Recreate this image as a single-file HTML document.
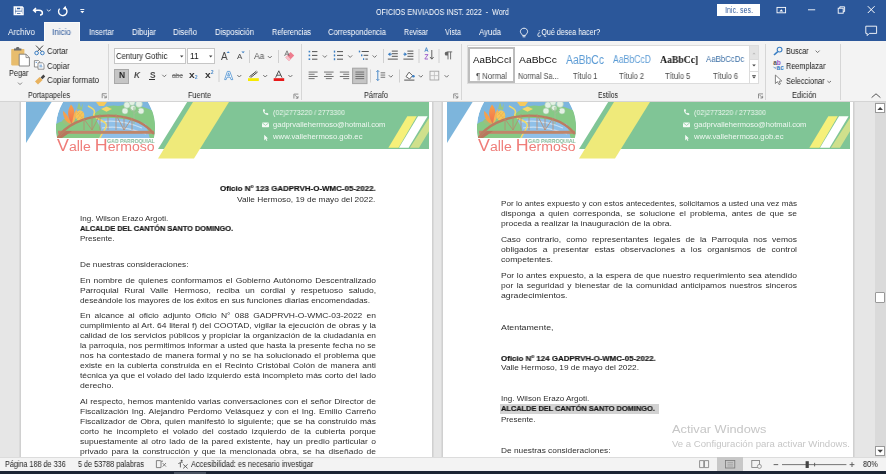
<!DOCTYPE html>
<html><head><meta charset="utf-8"><style>
html,body{margin:0;padding:0;width:886px;height:474px;overflow:hidden;background:#fff;position:relative}
.t{position:absolute;white-space:pre;line-height:1;font-family:"Liberation Sans",sans-serif;will-change:transform}
.j{white-space:normal;text-align:justify;text-align-last:justify;overflow:visible}
svg{position:absolute;overflow:visible}
</style></head><body>
<div style="position:absolute;left:0;top:0;width:886px;height:41px;background:#2b579a"></div>
<div style="position:absolute;left:44px;top:22px;width:36px;height:20px;background:#f3f3f3;border:1px solid #fbfbfb;border-bottom:none;box-sizing:border-box"></div>
<div style="position:absolute;left:717px;top:4px;width:43px;height:12px;background:#fff"></div>
<div style="position:absolute;left:0;top:41px;width:886px;height:60px;background:#f3f3f3"></div>
<div style="position:absolute;left:0;top:101px;width:886px;height:1px;background:#d4d4d4"></div>
<div style="position:absolute;left:108px;top:44px;width:1px;height:56px;background:#d6d6d6"></div>
<div style="position:absolute;left:301px;top:44px;width:1px;height:56px;background:#d6d6d6"></div>
<div style="position:absolute;left:461px;top:44px;width:1px;height:56px;background:#d6d6d6"></div>
<div style="position:absolute;left:765px;top:44px;width:1px;height:56px;background:#d6d6d6"></div>
<div style="position:absolute;left:840px;top:44px;width:1px;height:56px;background:#d6d6d6"></div>
<div style="position:absolute;left:114px;top:48px;width:72px;height:16px;background:#fff;border:1px solid #c6c6c6;box-sizing:border-box"></div>
<div style="position:absolute;left:187px;top:48px;width:28px;height:16px;background:#fff;border:1px solid #c6c6c6;box-sizing:border-box"></div>
<div style="position:absolute;left:114px;top:69px;width:15px;height:15px;background:#c5c5c5;border:1px solid #a8a8a8;box-sizing:border-box"></div>
<div style="position:absolute;left:149px;top:79px;width:6px;height:1px;background:#333;z-index:2"></div>
<div style="position:absolute;left:172px;top:75px;width:11px;height:1px;background:#777;z-index:2"></div>
<div style="position:absolute;left:467px;top:45px;width:292px;height:39px;background:#fff;border:1px solid #dcdcdc;box-sizing:border-box"></div>
<div style="position:absolute;left:468px;top:47px;width:47px;height:36px;border:2px solid #bdbdbd;box-sizing:border-box"></div>
<div style="position:absolute;left:749px;top:45px;width:10px;height:39px;border:1px solid #dcdcdc;box-sizing:border-box;background:#fff"></div>
<div style="position:absolute;left:750px;top:46px;width:8px;height:13px;background:#e3e3e3"></div>
<div style="position:absolute;left:749px;top:59px;width:10px;height:1px;background:#dcdcdc"></div>
<div style="position:absolute;left:749px;top:71px;width:10px;height:1px;background:#dcdcdc"></div>
<div style="position:absolute;left:0;top:102px;width:886px;height:355px;background:#e6e6e6"></div>
<div style="position:absolute;left:19px;top:102px;width:415px;height:355px;background:#fff;border-left:1px solid #dadada;border-right:1px solid #dadada;box-shadow:inset 1px 0 0 #d0d0d0, inset -1px 0 0 #d0d0d0;box-sizing:border-box"></div>
<div style="position:absolute;left:441px;top:102px;width:414px;height:355px;background:#fff;border-left:1px solid #dadada;border-right:1px solid #dadada;box-shadow:inset 1px 0 0 #d0d0d0, inset -1px 0 0 #d0d0d0;box-sizing:border-box"></div>
<div style="position:absolute;left:875px;top:102px;width:11px;height:355px;background:#dadada"></div>
<div style="position:absolute;left:875px;top:103px;width:10px;height:10px;background:#fff;border:1px solid #999;box-sizing:border-box"></div>
<div style="position:absolute;left:875px;top:446px;width:10px;height:10px;background:#fff;border:1px solid #999;box-sizing:border-box"></div>
<div style="position:absolute;left:875px;top:292px;width:10px;height:11px;background:#fff;border:1px solid #999;box-sizing:border-box;border-radius:1px"></div>
<div style="position:absolute;z-index:5;left:0;top:457px;width:886px;height:14px;background:#f3f3f3;border-top:1px solid #dcdcdc;box-sizing:border-box"></div>
<div style="position:absolute;z-index:5;left:0;top:471px;width:886px;height:3px;background:#1c2533"></div>
<div style="position:absolute;z-index:6;left:174px;top:472px;width:32px;height:2px;background:#4a5360"></div>
<div style="position:absolute;z-index:6;left:717px;top:457px;width:26px;height:14px;background:#c8c8c8"></div>
<svg style="left:0;top:0" width="886" height="102" viewBox="0 0 886 102"><g stroke="#fff" fill="none" stroke-width="1.5"><path d="M14.3,6.9 H22.2 L23,7.7 V14.6 H14.3 Z"/><path d="M16.2,7 V10 H21 V7"/><path d="M16.2,14.6 V12.2 H21.2 V14.6"/><path d="M36,8 L33.6,10.2 L36,12.4 M33.8,10.2 H39 C41.5,10.2 42.4,11.8 42.4,13 C42.4,14.2 41.4,15 40,15"/><path d="M46.8,9.6 L48.8,11.2 L50.8,9.6" stroke-width="0.8"/><path d="M64.6,7.6 A4.2,4.2 0 1 1 59.6,8.6" stroke-width="1.4"/></g><path d="M65.5,5.8 L66.5,9.6 L62.6,9.2 Z" fill="#fff"/><rect x="80.3" y="9" width="4" height="0.9" fill="#fff"/><path d="M80.3,11 H84.3 L82.3,13.2 Z" fill="#fff"/><g stroke="#fff" fill="none" stroke-width="0.9"><rect x="777" y="7.4" width="8.6" height="5.4"/><path d="M808,9.8 H815.2"/><rect x="838.2" y="8.2" width="5" height="5"/><path d="M839.8,8.2 V6.8 H844.6 V11.6 H843.2"/><path d="M867.8,6.2 L874.6,13 M874.6,6.2 L867.8,13" stroke-width="1"/><path d="M865.8,26.2 H876.6 V33.4 H869.4 L867.2,35.6 V33.4 H865.8 Z"/><path d="M524,28.2 C521.6,28.2 520.4,30 520.4,31.6 C520.4,33.2 522,34 522.4,35.4 H525.6 C526,34 527.6,33.2 527.6,31.6 C527.6,30 526.4,28.2 524,28.2 Z M522.6,36.8 H525.4"/></g><path d="M779.4,11.6 L781.3,9.2 L783.2,11.6 Z" fill="#fff"/><rect x="11.2" y="49" width="13.2" height="16.4" rx="0.8" fill="#e8bd6e"/><path d="M14,50.6 V48.4 H16 C16,46.6 19.4,46.6 19.4,48.4 H21.4 V50.6 Z" fill="#6b6b6b"/><path d="M19.2,54.2 H26 L29.4,57.6 V66 H19.2 Z" fill="#fff" stroke="#7a7a7a" stroke-width="0.9"/><path d="M26,54.2 V57.6 H29.4" fill="none" stroke="#7a7a7a" stroke-width="0.8"/><path d="M18,82.6 L20,84.6 L22,82.6" stroke="#777" stroke-width="0.9" fill="none"/><path d="M36,45.6 L42.2,52 M43,45.6 L36.8,52" stroke="#444" stroke-width="1"/><circle cx="36.6" cy="53" r="1.8" fill="none" stroke="#3b7fc4" stroke-width="1"/><circle cx="42.4" cy="53" r="1.8" fill="none" stroke="#3b7fc4" stroke-width="1"/><path d="M34.4,60.6 H38.6 L39.6,61.6 V67 H34.4 Z" fill="#fff" stroke="#777" stroke-width="0.8"/><path d="M38,62.8 H42.4 L44,64.4 V69.2 H38 Z" fill="#fff" stroke="#777" stroke-width="0.8"/><path d="M35.6,62.4 H37 M39.4,65.2 H42 M39.4,66.8 H42.4" stroke="#4a86c5" stroke-width="0.8"/><path d="M35,81.5 L39.6,77 L42.6,80 L38,84.6 Z" fill="#e8b25e"/><path d="M40.6,77.4 L43.4,74.6 L45.2,76.4 L42.4,79.2 Z" fill="#444"/><path d="M180,55.4 H183.4 L181.7,57.4 Z" fill="#444"/><path d="M209,55.4 H212.4 L210.7,57.4 Z" fill="#444"/><path d="M162.3,74.8 L164.3,76.8 L166.3,74.8" stroke="#666" stroke-width="0.9" fill="none"/><path d="M237.3,75 L239.3,77 L241.3,75" stroke="#666" stroke-width="0.9" fill="none"/><path d="M263.2,75 L265.2,77 L267.2,75" stroke="#666" stroke-width="0.9" fill="none"/><path d="M288.4,75 L290.4,77 L292.4,75" stroke="#666" stroke-width="0.9" fill="none"/><path d="M267.8,56 L269.8,58 L271.8,56" stroke="#666" stroke-width="0.9" fill="none"/><path d="M102.2,93.7 H106.7 M102.2,93.7 V98.2 M103.2,94.7 L106.2,97.7 M106.3,95.60000000000001 V97.8 H104.10000000000001" stroke="#777" stroke-width="0.8" fill="none"/><path d="M293.9,94.1 H298.4 M293.9,94.1 V98.6 M294.9,95.1 L297.9,98.1 M298.0,96.0 V98.19999999999999 H295.79999999999995" stroke="#777" stroke-width="0.8" fill="none"/><path d="M453.7,93.9 H458.2 M453.7,93.9 V98.4 M454.7,94.9 L457.7,97.9 M457.8,95.80000000000001 V98.0 H455.59999999999997" stroke="#777" stroke-width="0.8" fill="none"/><path d="M758.5,93.9 H763 M758.5,93.9 V98.4 M759.5,94.9 L762.5,97.9 M762.6,95.80000000000001 V98.0 H760.4" stroke="#777" stroke-width="0.8" fill="none"/><rect x="249" y="50" width="1" height="13" fill="#d0d0d0"/><rect x="278" y="50" width="1" height="13" fill="#d0d0d0"/><rect x="218.5" y="69.5" width="1" height="12.5" fill="#d0d0d0"/><path d="M226.6,53 L228.2,51.2 L229.8,53 Z" fill="#3b7fc4"/><path d="M241.4,51.4 H244.8 L243.1,53.2 Z" fill="#3b7fc4"/><path d="M287,89 Z"/><path d="M285.4,57.4 L290.6,52 L294.2,55.6 L289,61 Z" fill="#ee7d8e"/><path d="M285.4,57.4 L287.2,55.6 L290.8,59.2 L289,61 Z" fill="#f7c2ca"/><path d="M284.6,56 L287,50.8 L289.2,56 M285.6,54.2 H288.4" stroke="#666" stroke-width="0.8" fill="none"/><path d="M224.6,79.6 L227.4,71.4 H229.8 L232.8,79.6 H231 L230.2,77.2 H227 L226.2,79.6 Z M227.6,75.8 H229.6 L228.6,72.8 Z" stroke="#4a8fd0" stroke-width="0.8" fill="#fff"/><path d="M249.4,76.8 L256.4,71.2 M250.6,77.6 L257.6,72" stroke="#444" stroke-width="1"/><rect x="248" y="78.2" width="10.8" height="2.8" fill="#f7ea00"/><path d="M275.6,77.6 L278.8,70.8 L282,77.6 M276.8,75.2 H280.8" stroke="#444" stroke-width="0.9" fill="none"/><rect x="273.7" y="78.2" width="10.5" height="2.8" fill="#e81919"/><rect x="308.6" y="50.8" width="1.6" height="1.6" fill="#3b7fc4"/><rect x="312.0" y="51.099999999999994" width="5.4" height="1" fill="#555"/><rect x="308.6" y="54.599999999999994" width="1.6" height="1.6" fill="#3b7fc4"/><rect x="312.0" y="54.89999999999999" width="5.4" height="1" fill="#555"/><rect x="308.6" y="58.4" width="1.6" height="1.6" fill="#3b7fc4"/><rect x="312.0" y="58.699999999999996" width="5.4" height="1" fill="#555"/><path d="M322.8,55.4 L324.8,57.4 L326.8,55.4" stroke="#666" stroke-width="0.9" fill="none"/><rect x="333.8" y="50.6" width="1.4" height="2" fill="#3b7fc4"/><rect x="337" y="51.1" width="6" height="1" fill="#555"/><rect x="333.8" y="54.4" width="1.4" height="2" fill="#3b7fc4"/><rect x="337" y="54.9" width="6" height="1" fill="#555"/><rect x="333.8" y="58.2" width="1.4" height="2" fill="#3b7fc4"/><rect x="337" y="58.7" width="6" height="1" fill="#555"/><path d="M348.2,55.4 L350.2,57.4 L352.2,55.4" stroke="#666" stroke-width="0.9" fill="none"/><rect x="358.8" y="50.6" width="1.4" height="1.8" fill="#3b7fc4"/><rect x="361.6" y="51" width="7.2" height="1" fill="#555"/><rect x="361" y="54.4" width="1.4" height="1.8" fill="#3b7fc4"/><rect x="363.6" y="54.8" width="4.6" height="1" fill="#555"/><rect x="363" y="58.2" width="1.2" height="1.8" fill="#3b7fc4"/><rect x="365.4" y="58.6" width="2.4" height="1" fill="#555"/><path d="M372.6,55.4 L374.6,57.4 L376.6,55.4" stroke="#666" stroke-width="0.9" fill="none"/><rect x="383" y="49" width="1" height="14" fill="#d0d0d0"/><rect x="391.8" y="50.6" width="6" height="1" fill="#555"/><rect x="391.8" y="53.2" width="6" height="1" fill="#555"/><rect x="391.8" y="55.8" width="6" height="1" fill="#555"/><rect x="387.8" y="58.6" width="10" height="1" fill="#555"/><rect x="387.8" y="50.6" width="0.1" height="0.1" fill="#555"/><path d="M387.8,54.2 L390.40000000000003,52.2 V56.2 Z" fill="#3b7fc4"/><rect x="389.8" y="53.7" width="2" height="1" fill="#3b7fc4"/><rect x="407.4" y="50.6" width="6" height="1" fill="#555"/><rect x="407.4" y="53.2" width="6" height="1" fill="#555"/><rect x="407.4" y="55.8" width="6" height="1" fill="#555"/><rect x="403.4" y="58.6" width="10" height="1" fill="#555"/><rect x="403.4" y="50.6" width="0.1" height="0.1" fill="#555"/><path d="M407.0,54.2 L404.4,52.2 V56.2 Z" fill="#3b7fc4"/><rect x="403.4" y="53.7" width="2" height="1" fill="#3b7fc4"/><rect x="418.5" y="49" width="1" height="14" fill="#d0d0d0"/><path d="M424.8,51.8 L426.4,47.6 L428,51.8 M425.4,50.4 H427.4" stroke="#3b7fc4" stroke-width="0.8" fill="none"/><path d="M424.8,54.6 H428 L424.8,59 H428" stroke="#9b59c9" stroke-width="0.9" fill="none"/><path d="M431.8,50 V59 M430,57 L431.8,59.2 L433.6,57" stroke="#555" stroke-width="0.9" fill="none"/><rect x="438.5" y="49" width="1" height="14" fill="#d0d0d0"/><path d="M448,51.8 H446.2 C444.4,51.8 444.2,55.6 446.2,55.6 H448 Z" fill="#666"/><path d="M448,51.8 V59.4 M450.6,51.8 V59.4 M447.4,51.9 H452.2" stroke="#666" stroke-width="0.9" fill="none"/><rect x="308.6" y="71.6" width="9" height="0.9" fill="#666"/><rect x="308.6" y="73.8" width="6" height="0.9" fill="#666"/><rect x="308.6" y="76.0" width="9" height="0.9" fill="#666"/><rect x="308.6" y="78.19999999999999" width="6" height="0.9" fill="#666"/><rect x="324" y="71.6" width="9.6" height="0.9" fill="#666"/><rect x="325.8" y="73.8" width="6" height="0.9" fill="#666"/><rect x="324" y="76.0" width="9.6" height="0.9" fill="#666"/><rect x="325.8" y="78.19999999999999" width="6" height="0.9" fill="#666"/><rect x="339.8" y="71.6" width="9.4" height="0.9" fill="#666"/><rect x="343.2" y="73.8" width="6" height="0.9" fill="#666"/><rect x="339.8" y="76.0" width="9.4" height="0.9" fill="#666"/><rect x="343.2" y="78.19999999999999" width="6" height="0.9" fill="#666"/><rect x="352.6" y="68.2" width="14.4" height="15.4" fill="#c5c5c5" stroke="#a3a3a3" stroke-width="1"/><rect x="355.4" y="71.6" width="8.8" height="0.9" fill="#666"/><rect x="355.4" y="73.8" width="8.8" height="0.9" fill="#666"/><rect x="355.4" y="76.0" width="8.8" height="0.9" fill="#666"/><rect x="355.4" y="78.19999999999999" width="8.8" height="0.9" fill="#666"/><rect x="370" y="69.5" width="1" height="13.0" fill="#d0d0d0"/><path d="M376.4,71.8 L377.8,70.4 L379.2,71.8 M377.8,70.6 V80.4 M376.4,79.2 L377.8,80.6 L379.2,79.2" stroke="#3b7fc4" stroke-width="0.9" fill="none"/><rect x="380.6" y="72.4" width="4.6" height="0.9" fill="#666"/><rect x="380.6" y="74.60000000000001" width="4.6" height="0.9" fill="#666"/><rect x="380.6" y="76.80000000000001" width="4.6" height="0.9" fill="#666"/><path d="M388.8,75.2 L390.8,77.2 L392.8,75.2" stroke="#666" stroke-width="0.9" fill="none"/><rect x="399" y="69.5" width="1" height="13.0" fill="#d0d0d0"/><path d="M406,76.6 L409,72.2 L412.6,75.6 L409.6,79 Z" fill="#fff" stroke="#555" stroke-width="0.9"/><circle cx="413.4" cy="76.2" r="1.3" fill="#3b7fc4"/><rect x="404.2" y="79.6" width="10.2" height="1" fill="#555"/><path d="M418.8,75.2 L420.8,77.2 L422.8,75.2" stroke="#666" stroke-width="0.9" fill="none"/><rect x="430" y="71.2" width="8.8" height="8.8" fill="none" stroke="#9a9a9a" stroke-width="0.8"/><path d="M434.4,71.2 V80 M430,75.6 H438.8" stroke="#bcbcbc" stroke-width="0.8"/><path d="M444.6,75.2 L446.6,77.2 L448.6,75.2" stroke="#666" stroke-width="0.9" fill="none"/><path d="M752.4,54.2 L754,52.6 L755.6,54.2 Z" fill="#bbb"/><path d="M752.2,64.6 H755.8 L754,66.6 Z" fill="#444"/><rect x="752.2" y="75" width="3.6" height="0.8" fill="#444"/><path d="M752.2,76.6 H755.8 L754,78.6 Z" fill="#444"/><circle cx="779.6" cy="49.6" r="2.4" fill="none" stroke="#3b7fc4" stroke-width="1.1"/><path d="M777.8,51.6 L774,55" stroke="#3b7fc4" stroke-width="1.6"/><path d="M815.6,50.6 L817.6,52.6 L819.6,50.6" stroke="#666" stroke-width="0.9" fill="none"/><text x="773.2" y="65.2" font-family="Liberation Sans" font-size="6.6" font-weight="700" fill="#555">a</text><text x="776.8" y="65.2" font-family="Liberation Sans" font-size="6.6" font-weight="700" fill="#9b59c9">b</text><text x="776.6" y="70.4" font-family="Liberation Sans" font-size="6.4" font-weight="700" fill="#3b7fc4">ac</text><path d="M773.6,66.8 L775,68.4 L776.4,67.2" stroke="#3b7fc4" stroke-width="0.8" fill="none"/><path d="M827.4,81 L829.2,82.6 L831,81" stroke="#666" stroke-width="0.9" fill="none"/><path d="M775.4,75 V83.6 L777.4,81.6 L779,84.6 L780.4,84 L779,81.2 L781.8,81 Z" fill="#fff" stroke="#666" stroke-width="0.8"/><path d="M871.6,97.6 L876,93.8 L880.4,97.6" stroke="#555" stroke-width="1" fill="none"/></svg>
<svg style="left:0;top:0;z-index:8" width="886" height="474" viewBox="0 0 886 474"><path d="M156.4,460.6 H160.4 L161,461.2 V467.6 H156.4 Z M161,461.2 H163" fill="none" stroke="#666" stroke-width="0.8"/><path d="M162.6,463 L166,466.6 M166,463 L162.6,466.6" stroke="#666" stroke-width="0.8"/><circle cx="181.6" cy="460.8" r="1" fill="#555"/><path d="M178.4,464 C179.4,462.4 181,462.2 182.6,462.6 M180.4,463 L180.4,467.4 M183.2,464.4 L187.6,468.4 M187.6,464.4 L183.2,468.4" stroke="#555" stroke-width="0.9" fill="none"/><path d="M699.6,460.6 H703.8 V467.6 H699.6 Z M704.4,460.6 H708.6 V467.6 H704.4 Z" fill="none" stroke="#777" stroke-width="0.8"/><rect x="725.6" y="460.4" width="9.2" height="7.6" fill="none" stroke="#777" stroke-width="0.8"/><path d="M727.4,462.4 H733 M727.4,464.2 H733 M727.4,466 H733" stroke="#999" stroke-width="0.7"/><rect x="751.8" y="460.4" width="7.6" height="7" fill="none" stroke="#777" stroke-width="0.8"/><circle cx="759.4" cy="466.4" r="2" fill="#f3f3f3" stroke="#777" stroke-width="0.7"/><rect x="773.6" y="464.2" width="4.6" height="0.9" fill="#555"/><rect x="782" y="464.2" width="64.4" height="0.9" fill="#666"/><rect x="805.6" y="461.2" width="3.2" height="6.8" fill="#444"/><rect x="814.2" y="462.8" width="0.9" height="3.6" fill="#555"/><path d="M849.6,464.6 H854.4 M852,462.2 V467" stroke="#555" stroke-width="0.9"/><path d="M877.4,110 L880.2,107 L883,110 Z" fill="#444"/><path d="M877.4,449.8 H883 L880.2,452.8 Z" fill="#444"/></svg>
<svg style="left:0px;top:0px" width="886" height="170" viewBox="0 0 886 170">
<defs>
<clipPath id="lc0"><path d="M56,102 H156 V138 H56 Z"/></clipPath><clipPath id="cc0"><circle cx="105.5" cy="127.5" r="49.5"/></clipPath>
<clipPath id="pc0"><rect x="22" y="102" width="407" height="60"/></clipPath>
<linearGradient id="vh0" x1="0" x2="1" y1="0" y2="0"><stop offset="0" stop-color="#f3837f"/><stop offset="1" stop-color="#f08e92"/></linearGradient>
<linearGradient id="fl0" x1="0" x2="0" y1="0" y2="1"><stop offset="0" stop-color="#f7a24a"/><stop offset="1" stop-color="#f26d4f"/></linearGradient>
</defs>
<g clip-path="url(#pc0)">
<polygon points="26,102 51.6,102 26,143" fill="#7db5dc"/>
<polygon points="187.2,102 429,102 429,149 158,149" fill="#80c596"/>
<polygon points="193,102 229,102 194,158.5 158,158.5" fill="#efea7a"/>
<polygon points="407.3,116.2 416.8,116.2 398.5,147.8 388.4,147.8" fill="#f6f07a"/>
<polygon points="418,116.2 427.6,116.2 408.6,147.8 399,147.8" fill="#ffffff"/>
<polygon points="429,118 429,116.2 438,116.2 419,147.8 409.9,147.8" fill="#cfe08c"/>
</g>
<g clip-path="url(#lc0)"><g clip-path="url(#cc0)">
<circle cx="105.5" cy="127.5" r="49.5" fill="#7db6de"/>
<path d="M56,124 C66,118 80,120 92,116 C100,108 110,104 118,106 C126,104 140,104 156,112 L156,139 L56,139 Z" fill="#86c985"/>
<path d="M96,120 C108,116 126,118 146,124 L150,139 L98,139 C104,132 100,126 96,120 Z" fill="#8fc0e8"/>
<path d="M100,122 C112,120 128,122 142,128" stroke="#c9e0f4" stroke-width="1.2" fill="none"/>
<path d="M102,128 C114,126 130,128 146,134" stroke="#c9e0f4" stroke-width="1.2" fill="none"/>
<path d="M88,106 C92,108 96,110 94,114 C92,118 104,120 106,124 C108,128 102,132 100,138" stroke="#f1d96a" stroke-width="1.6" fill="none"/>
<polygon points="101,109 106.5,106.6 112,109 106.5,111.8" fill="#f4d76c"/>
<path d="M96,102 L107,102 L104,106 L99,106 Z" fill="#f6c95c"/>
<g fill="#e4f1e4" stroke="#a9cfae" stroke-width="0.6">
<circle cx="127" cy="105" r="3.2"/><circle cx="132" cy="102.5" r="3"/><circle cx="139" cy="104" r="3.4"/><circle cx="125" cy="111" r="3"/><circle cx="141" cy="111" r="3"/><circle cx="133" cy="108" r="2.6"/>
</g>
<path d="M134,107 V124 M134,112 L129,108 M134,114 L139,110" stroke="#9cbf94" stroke-width="1" fill="none"/>
<path d="M62,121 C66,116 70,118 72,122 C70,126 64,126 62,121 Z" fill="#9cc07c"/>
<path d="M63,111 C66,113 69,117 71,124 C67,123 63,119 63,111 Z" fill="#f6a04c"/>
<path d="M71,104.5 C75,109 76,116 72,124 C67,117 67,110 71,104.5 Z" fill="url(#fl0)"/>
<path d="M77,109 C77,115 76,120 72,124 C73,117 74,112 77,109 Z" fill="#f4b457"/>
<ellipse cx="80" cy="115.6" rx="4.3" ry="5.4" fill="#f5c65c"/><path d="M77,112 L83,119 M83,112 L77,119 M76.5,115.5 L80,112 M80,119.5 L83.6,115.8" stroke="#e9a84c" stroke-width="0.5"/>
<path d="M77,109 L79,102 L81,108 L83,103 L82,110 Z" fill="#9cc87e"/>
<rect x="58" y="130.8" width="96" height="3" fill="#c0866a"/><path d="M57,138 L66,131 H72 L62,138 Z" fill="#b7775d"/>
<path d="M57,139 C72,112 132,106 154,134" stroke="#bb7c60" stroke-width="2.4" fill="none"/>
<g stroke="#b98a6e" stroke-width="0.8">
<line x1="84" y1="119" x2="84" y2="130"/><line x1="92" y1="116" x2="92" y2="130"/><line x1="100" y1="114.5" x2="100" y2="130"/>
<line x1="108" y1="114" x2="108" y2="130"/><line x1="116" y1="114.5" x2="116" y2="130"/><line x1="124" y1="116" x2="124" y2="130"/><line x1="132" y1="118" x2="132" y2="130"/>
<line x1="84" y1="119" x2="92" y2="130"/><line x1="100" y1="114.5" x2="92" y2="130"/><line x1="116" y1="114.5" x2="124" y2="130"/><line x1="132" y1="118" x2="124" y2="130"/>
</g>
</g></g>
<g fill="#ffffff" opacity="0.92">
<path d="M263.2,109.2 C262.6,110.2 263,112.6 265.4,114.2 C266.8,115.2 268,115.2 268.4,114.6 L268.2,113.4 L266.6,112.8 L266,113.4 C265.2,113 264.6,112.2 264.4,111.4 L265,110.8 L264.6,109.2 Z"/>
<rect x="262" y="122.6" width="7" height="4.6" rx="0.6"/>
<path d="M264.2,134.8 L264.2,140.4 L265.4,139 L266.6,141 L267.4,140.6 L266.4,138.6 L268,138.4 Z"/>
</g>
<path d="M262.2,122.8 L265.5,125.4 L268.8,122.8" stroke="#80c596" stroke-width="0.7" fill="none"/>
</svg>
<svg style="left:421px;top:0px" width="886" height="170" viewBox="0 0 886 170">
<defs>
<clipPath id="lc421"><path d="M56,102 H156 V138 H56 Z"/></clipPath><clipPath id="cc421"><circle cx="105.5" cy="127.5" r="49.5"/></clipPath>
<clipPath id="pc421"><rect x="22" y="102" width="407" height="60"/></clipPath>
<linearGradient id="vh421" x1="0" x2="1" y1="0" y2="0"><stop offset="0" stop-color="#f3837f"/><stop offset="1" stop-color="#f08e92"/></linearGradient>
<linearGradient id="fl421" x1="0" x2="0" y1="0" y2="1"><stop offset="0" stop-color="#f7a24a"/><stop offset="1" stop-color="#f26d4f"/></linearGradient>
</defs>
<g clip-path="url(#pc421)">
<polygon points="26,102 51.6,102 26,143" fill="#7db5dc"/>
<polygon points="187.2,102 429,102 429,149 158,149" fill="#80c596"/>
<polygon points="193,102 229,102 194,158.5 158,158.5" fill="#efea7a"/>
<polygon points="407.3,116.2 416.8,116.2 398.5,147.8 388.4,147.8" fill="#f6f07a"/>
<polygon points="418,116.2 427.6,116.2 408.6,147.8 399,147.8" fill="#ffffff"/>
<polygon points="429,118 429,116.2 438,116.2 419,147.8 409.9,147.8" fill="#cfe08c"/>
</g>
<g clip-path="url(#lc421)"><g clip-path="url(#cc421)">
<circle cx="105.5" cy="127.5" r="49.5" fill="#7db6de"/>
<path d="M56,124 C66,118 80,120 92,116 C100,108 110,104 118,106 C126,104 140,104 156,112 L156,139 L56,139 Z" fill="#86c985"/>
<path d="M96,120 C108,116 126,118 146,124 L150,139 L98,139 C104,132 100,126 96,120 Z" fill="#8fc0e8"/>
<path d="M100,122 C112,120 128,122 142,128" stroke="#c9e0f4" stroke-width="1.2" fill="none"/>
<path d="M102,128 C114,126 130,128 146,134" stroke="#c9e0f4" stroke-width="1.2" fill="none"/>
<path d="M88,106 C92,108 96,110 94,114 C92,118 104,120 106,124 C108,128 102,132 100,138" stroke="#f1d96a" stroke-width="1.6" fill="none"/>
<polygon points="101,109 106.5,106.6 112,109 106.5,111.8" fill="#f4d76c"/>
<path d="M96,102 L107,102 L104,106 L99,106 Z" fill="#f6c95c"/>
<g fill="#e4f1e4" stroke="#a9cfae" stroke-width="0.6">
<circle cx="127" cy="105" r="3.2"/><circle cx="132" cy="102.5" r="3"/><circle cx="139" cy="104" r="3.4"/><circle cx="125" cy="111" r="3"/><circle cx="141" cy="111" r="3"/><circle cx="133" cy="108" r="2.6"/>
</g>
<path d="M134,107 V124 M134,112 L129,108 M134,114 L139,110" stroke="#9cbf94" stroke-width="1" fill="none"/>
<path d="M62,121 C66,116 70,118 72,122 C70,126 64,126 62,121 Z" fill="#9cc07c"/>
<path d="M63,111 C66,113 69,117 71,124 C67,123 63,119 63,111 Z" fill="#f6a04c"/>
<path d="M71,104.5 C75,109 76,116 72,124 C67,117 67,110 71,104.5 Z" fill="url(#fl421)"/>
<path d="M77,109 C77,115 76,120 72,124 C73,117 74,112 77,109 Z" fill="#f4b457"/>
<ellipse cx="80" cy="115.6" rx="4.3" ry="5.4" fill="#f5c65c"/><path d="M77,112 L83,119 M83,112 L77,119 M76.5,115.5 L80,112 M80,119.5 L83.6,115.8" stroke="#e9a84c" stroke-width="0.5"/>
<path d="M77,109 L79,102 L81,108 L83,103 L82,110 Z" fill="#9cc87e"/>
<rect x="58" y="130.8" width="96" height="3" fill="#c0866a"/><path d="M57,138 L66,131 H72 L62,138 Z" fill="#b7775d"/>
<path d="M57,139 C72,112 132,106 154,134" stroke="#bb7c60" stroke-width="2.4" fill="none"/>
<g stroke="#b98a6e" stroke-width="0.8">
<line x1="84" y1="119" x2="84" y2="130"/><line x1="92" y1="116" x2="92" y2="130"/><line x1="100" y1="114.5" x2="100" y2="130"/>
<line x1="108" y1="114" x2="108" y2="130"/><line x1="116" y1="114.5" x2="116" y2="130"/><line x1="124" y1="116" x2="124" y2="130"/><line x1="132" y1="118" x2="132" y2="130"/>
<line x1="84" y1="119" x2="92" y2="130"/><line x1="100" y1="114.5" x2="92" y2="130"/><line x1="116" y1="114.5" x2="124" y2="130"/><line x1="132" y1="118" x2="124" y2="130"/>
</g>
</g></g>
<g fill="#ffffff" opacity="0.92">
<path d="M263.2,109.2 C262.6,110.2 263,112.6 265.4,114.2 C266.8,115.2 268,115.2 268.4,114.6 L268.2,113.4 L266.6,112.8 L266,113.4 C265.2,113 264.6,112.2 264.4,111.4 L265,110.8 L264.6,109.2 Z"/>
<rect x="262" y="122.6" width="7" height="4.6" rx="0.6"/>
<path d="M264.2,134.8 L264.2,140.4 L265.4,139 L266.6,141 L267.4,140.6 L266.4,138.6 L268,138.4 Z"/>
</g>
<path d="M262.2,122.8 L265.5,125.4 L268.8,122.8" stroke="#80c596" stroke-width="0.7" fill="none"/>
</svg>
<div style="position:absolute;left:500px;top:404px;width:159px;height:10px;background:#d2d2d2"></div>
<div class="t" style="left:376.00px;top:7.59px;font-size:8.4px;color:#ffffff;font-weight:400;font-family:'Liberation Sans';font-style:normal;transform:scaleX(0.8538);transform-origin:0 0;">OFICIOS ENVIADOS INST. 2022  -  Word</div>
<div class="t" style="left:8.00px;top:28.00px;font-size:8.5px;color:#ffffff;font-weight:400;font-family:'Liberation Sans';font-style:normal;transform:scaleX(0.9526);transform-origin:0 0;">Archivo</div>
<div class="t" style="left:89.00px;top:28.00px;font-size:8.5px;color:#ffffff;font-weight:400;font-family:'Liberation Sans';font-style:normal;transform:scaleX(0.8672);transform-origin:0 0;">Insertar</div>
<div class="t" style="left:132.00px;top:28.00px;font-size:8.5px;color:#ffffff;font-weight:400;font-family:'Liberation Sans';font-style:normal;transform:scaleX(0.8910);transform-origin:0 0;">Dibujar</div>
<div class="t" style="left:173.00px;top:28.00px;font-size:8.5px;color:#ffffff;font-weight:400;font-family:'Liberation Sans';font-style:normal;transform:scaleX(0.9067);transform-origin:0 0;">Diseño</div>
<div class="t" style="left:215.00px;top:28.00px;font-size:8.5px;color:#ffffff;font-weight:400;font-family:'Liberation Sans';font-style:normal;transform:scaleX(0.8972);transform-origin:0 0;">Disposición</div>
<div class="t" style="left:272.00px;top:28.00px;font-size:8.5px;color:#ffffff;font-weight:400;font-family:'Liberation Sans';font-style:normal;transform:scaleX(0.8598);transform-origin:0 0;">Referencias</div>
<div class="t" style="left:328.00px;top:28.00px;font-size:8.5px;color:#ffffff;font-weight:400;font-family:'Liberation Sans';font-style:normal;transform:scaleX(0.8960);transform-origin:0 0;">Correspondencia</div>
<div class="t" style="left:404.00px;top:28.00px;font-size:8.5px;color:#ffffff;font-weight:400;font-family:'Liberation Sans';font-style:normal;transform:scaleX(0.8330);transform-origin:0 0;">Revisar</div>
<div class="t" style="left:445.00px;top:28.00px;font-size:8.5px;color:#ffffff;font-weight:400;font-family:'Liberation Sans';font-style:normal;transform:scaleX(0.8533);transform-origin:0 0;">Vista</div>
<div class="t" style="left:479.00px;top:28.00px;font-size:8.5px;color:#ffffff;font-weight:400;font-family:'Liberation Sans';font-style:normal;transform:scaleX(0.9185);transform-origin:0 0;">Ayuda</div>
<div class="t" style="left:537.00px;top:28.00px;font-size:8.5px;color:#ffffff;font-weight:400;font-family:'Liberation Sans';font-style:normal;transform:scaleX(0.8384);transform-origin:0 0;">¿Qué desea hacer?</div>
<div class="t" style="left:52.00px;top:28.00px;font-size:8.5px;color:#2b579a;font-weight:400;font-family:'Liberation Sans';font-style:normal;transform:scaleX(0.9575);transform-origin:0 0;">Inicio</div>
<div class="t" style="left:725.00px;top:6.18px;font-size:9px;color:#2b579a;font-weight:400;font-family:'Liberation Sans';font-style:normal;transform:scaleX(0.7884);transform-origin:0 0;">Inic. ses.</div>
<div class="t" style="left:28.00px;top:91.09px;font-size:8.4px;color:#262626;font-weight:400;font-family:'Liberation Sans';font-style:normal;transform:scaleX(0.8509);transform-origin:0 0;">Portapapeles</div>
<div class="t" style="left:188.00px;top:91.09px;font-size:8.4px;color:#262626;font-weight:400;font-family:'Liberation Sans';font-style:normal;transform:scaleX(0.8820);transform-origin:0 0;">Fuente</div>
<div class="t" style="left:364.00px;top:91.09px;font-size:8.4px;color:#262626;font-weight:400;font-family:'Liberation Sans';font-style:normal;transform:scaleX(0.8737);transform-origin:0 0;">Párrafo</div>
<div class="t" style="left:598.00px;top:91.09px;font-size:8.4px;color:#262626;font-weight:400;font-family:'Liberation Sans';font-style:normal;transform:scaleX(0.8106);transform-origin:0 0;">Estilos</div>
<div class="t" style="left:791.50px;top:91.09px;font-size:8.4px;color:#262626;font-weight:400;font-family:'Liberation Sans';font-style:normal;transform:scaleX(0.8919);transform-origin:0 0;">Edición</div>
<div class="t" style="left:9.00px;top:68.50px;font-size:8.5px;color:#1a1a1a;font-weight:400;font-family:'Liberation Sans';font-style:normal;transform:scaleX(0.8639);transform-origin:0 0;">Pegar</div>
<div class="t" style="left:47.00px;top:46.70px;font-size:8.5px;color:#1a1a1a;font-weight:400;font-family:'Liberation Sans';font-style:normal;transform:scaleX(0.8889);transform-origin:0 0;">Cortar</div>
<div class="t" style="left:47.00px;top:61.50px;font-size:8.5px;color:#1a1a1a;font-weight:400;font-family:'Liberation Sans';font-style:normal;transform:scaleX(0.8983);transform-origin:0 0;">Copiar</div>
<div class="t" style="left:47.00px;top:76.30px;font-size:8.5px;color:#1a1a1a;font-weight:400;font-family:'Liberation Sans';font-style:normal;transform:scaleX(0.9250);transform-origin:0 0;">Copiar formato</div>
<div class="t" style="left:116.30px;top:52.00px;font-size:8.5px;color:#1a1a1a;font-weight:400;font-family:'Liberation Sans';font-style:normal;transform:scaleX(0.9065);transform-origin:0 0;">Century Gothic</div>
<div class="t" style="left:189.60px;top:52.00px;font-size:8.5px;color:#1a1a1a;font-weight:400;font-family:'Liberation Sans';font-style:normal;">11</div>
<div class="t" style="left:118.50px;top:71.32px;font-size:8.6px;color:#222;font-weight:700;font-family:'Liberation Sans';font-style:normal;transform:scaleX(0.9648);transform-origin:0 0;">N</div>
<div class="t" style="left:133.60px;top:71.29px;font-size:8.4px;color:#4a4a4a;font-weight:700;font-family:'Liberation Sans';font-style:italic;transform:scaleX(0.9732);transform-origin:0 0;">K</div>
<div class="t" style="left:149.60px;top:71.29px;font-size:8.4px;color:#4a4a4a;font-weight:700;font-family:'Liberation Sans';font-style:normal;">S</div>
<div class="t" style="left:172.20px;top:71.60px;font-size:7.8px;color:#555;font-weight:400;font-family:'Liberation Sans';font-style:normal;transform:scaleX(0.8507);transform-origin:0 0;">abc</div>
<div class="t" style="left:189.30px;top:71.20px;font-size:8.5px;color:#333;font-weight:700;font-family:'Liberation Sans';font-style:normal;transform:scaleX(1.2040);transform-origin:0 0;">x</div>
<div class="t" style="left:195.40px;top:76.39px;font-size:4.5px;color:#3b7fc4;font-weight:700;font-family:'Liberation Sans';font-style:normal;transform:scaleX(0.9143);transform-origin:0 0;">2</div>
<div class="t" style="left:204.70px;top:71.20px;font-size:8.5px;color:#333;font-weight:700;font-family:'Liberation Sans';font-style:normal;transform:scaleX(1.2040);transform-origin:0 0;">x</div>
<div class="t" style="left:210.60px;top:70.79px;font-size:4.5px;color:#3b7fc4;font-weight:700;font-family:'Liberation Sans';font-style:normal;transform:scaleX(0.9540);transform-origin:0 0;">2</div>
<div class="t" style="left:220.50px;top:51.73px;font-size:10px;color:#444;font-weight:400;font-family:'Liberation Sans';font-style:normal;transform:scaleX(0.9742);transform-origin:0 0;">A</div>
<div class="t" style="left:237.00px;top:53.43px;font-size:8px;color:#444;font-weight:400;font-family:'Liberation Sans';font-style:normal;transform:scaleX(0.9731);transform-origin:0 0;">A</div>
<div class="t" style="left:254.00px;top:52.38px;font-size:9px;color:#555;font-weight:400;font-family:'Liberation Sans';font-style:normal;transform:scaleX(0.9350);transform-origin:0 0;">Aa</div>
<div class="t" style="left:472.50px;top:54.66px;font-size:9.5px;color:#111;font-weight:400;font-family:'Liberation Sans';font-style:normal;transform:scaleX(1.0267);transform-origin:0 0;">AaBbCcI</div>
<div class="t" style="left:476.00px;top:71.77px;font-size:8.3px;color:#4a4a4a;font-weight:400;font-family:'Liberation Sans';font-style:normal;transform:scaleX(0.9254);transform-origin:0 0;">¶ Normal</div>
<div class="t" style="left:519.30px;top:54.66px;font-size:9.5px;color:#111;font-weight:400;font-family:'Liberation Sans';font-style:normal;transform:scaleX(1.0901);transform-origin:0 0;">AaBbCc</div>
<div class="t" style="left:518.00px;top:71.77px;font-size:8.3px;color:#4a4a4a;font-weight:400;font-family:'Liberation Sans';font-style:normal;transform:scaleX(0.8805);transform-origin:0 0;">Normal Sa...</div>
<div class="t" style="left:566.00px;top:53.59px;font-size:12.3px;color:#5b9bd5;font-weight:400;font-family:'Liberation Sans';font-style:normal;transform:scaleX(0.8421);transform-origin:0 0;">AaBbCc</div>
<div class="t" style="left:572.50px;top:71.77px;font-size:8.3px;color:#4a4a4a;font-weight:400;font-family:'Liberation Sans';font-style:normal;transform:scaleX(0.8781);transform-origin:0 0;">Título 1</div>
<div class="t" style="left:612.60px;top:54.53px;font-size:10px;color:#5b9bd5;font-weight:400;font-family:'Liberation Sans';font-style:normal;transform:scaleX(0.8632);transform-origin:0 0;">AaBbCcD</div>
<div class="t" style="left:619.00px;top:71.77px;font-size:8.3px;color:#4a4a4a;font-weight:400;font-family:'Liberation Sans';font-style:normal;transform:scaleX(0.9034);transform-origin:0 0;">Título 2</div>
<div class="t" style="left:659.60px;top:54.53px;font-size:10px;color:#111;font-weight:700;font-family:'Liberation Serif';font-style:normal;transform:scaleX(0.9682);transform-origin:0 0;">AaBbCc]</div>
<div class="t" style="left:665.00px;top:71.77px;font-size:8.3px;color:#4a4a4a;font-weight:400;font-family:'Liberation Sans';font-style:normal;transform:scaleX(0.9143);transform-origin:0 0;">Título 5</div>
<div class="t" style="left:705.90px;top:55.21px;font-size:9.2px;color:#3a6ea5;font-weight:400;font-family:'Liberation Sans';font-style:normal;transform:scaleX(0.8523);transform-origin:0 0;">AaBbCcDc</div>
<div class="t" style="left:712.70px;top:71.77px;font-size:8.3px;color:#4a4a4a;font-weight:400;font-family:'Liberation Sans';font-style:normal;transform:scaleX(0.9034);transform-origin:0 0;">Título 6</div>
<div class="t" style="left:785.60px;top:46.70px;font-size:8.5px;color:#1a1a1a;font-weight:400;font-family:'Liberation Sans';font-style:normal;transform:scaleX(0.8576);transform-origin:0 0;">Buscar</div>
<div class="t" style="left:785.60px;top:61.60px;font-size:8.5px;color:#1a1a1a;font-weight:400;font-family:'Liberation Sans';font-style:normal;transform:scaleX(0.8597);transform-origin:0 0;">Reemplazar</div>
<div class="t" style="left:785.60px;top:76.50px;font-size:8.5px;color:#1a1a1a;font-weight:400;font-family:'Liberation Sans';font-style:normal;transform:scaleX(0.8712);transform-origin:0 0;">Seleccionar</div>
<div class="t" style="left:5.40px;top:459.60px;font-size:8.5px;color:#222;font-weight:400;font-family:'Liberation Sans';font-style:normal;transform:scaleX(0.8490);transform-origin:0 0;z-index:7;">Página 188 de 336</div>
<div class="t" style="left:78.00px;top:459.60px;font-size:8.5px;color:#222;font-weight:400;font-family:'Liberation Sans';font-style:normal;transform:scaleX(0.8514);transform-origin:0 0;z-index:7;">5 de 53788 palabras</div>
<div class="t" style="left:190.70px;top:459.60px;font-size:8.5px;color:#222;font-weight:400;font-family:'Liberation Sans';font-style:normal;transform:scaleX(0.8656);transform-origin:0 0;z-index:7;">Accesibilidad: es necesario investigar</div>
<div class="t" style="left:862.80px;top:459.60px;font-size:8.5px;color:#222;font-weight:400;font-family:'Liberation Sans';font-style:normal;transform:scaleX(0.8639);transform-origin:0 0;z-index:7;">80%</div>
<div class="t" style="left:273.30px;top:108.51px;font-size:7.2px;color:rgba(255,255,255,0.88);font-weight:400;font-family:'Liberation Sans';font-style:normal;transform:scaleX(0.9632);transform-origin:0 0;">(02)2773220 / 2773300</div>
<div class="t" style="left:273.30px;top:121.11px;font-size:7.2px;color:rgba(255,255,255,0.88);font-weight:400;font-family:'Liberation Sans';font-style:normal;transform:scaleX(1.0488);transform-origin:0 0;">gadprvallehermoso@hotmail.com</div>
<div class="t" style="left:273.30px;top:132.51px;font-size:7.2px;color:rgba(255,255,255,0.88);font-weight:400;font-family:'Liberation Sans';font-style:normal;transform:scaleX(1.0719);transform-origin:0 0;">www.vallehermoso.gob.ec</div>
<div class="t" style="left:57.40px;top:137.99px;font-size:12.3px;color:#ef7d79;font-weight:400;font-family:'Liberation Sans';font-style:normal;transform:scaleX(1.1447);transform-origin:0 0;"><span style="font-size:15.6px">V</span>a<span style="display:inline-block;transform:scaleY(1.2);transform-origin:50% 85%">ll</span>e <span style="font-size:15.6px">H</span>ermoso</div>
<div class="t" style="left:106.80px;top:139.16px;font-size:5.6px;color:#7fb897;font-weight:700;font-family:'Liberation Sans';font-style:normal;transform:scaleX(0.9322);transform-origin:0 0;">GAD PARROQUIAL</div>
<div class="t" style="left:694.30px;top:108.51px;font-size:7.2px;color:rgba(255,255,255,0.88);font-weight:400;font-family:'Liberation Sans';font-style:normal;transform:scaleX(0.9632);transform-origin:0 0;">(02)2773220 / 2773300</div>
<div class="t" style="left:694.30px;top:121.11px;font-size:7.2px;color:rgba(255,255,255,0.88);font-weight:400;font-family:'Liberation Sans';font-style:normal;transform:scaleX(1.0488);transform-origin:0 0;">gadprvallehermoso@hotmail.com</div>
<div class="t" style="left:694.30px;top:132.51px;font-size:7.2px;color:rgba(255,255,255,0.88);font-weight:400;font-family:'Liberation Sans';font-style:normal;transform:scaleX(1.0719);transform-origin:0 0;">www.vallehermoso.gob.ec</div>
<div class="t" style="left:478.40px;top:137.99px;font-size:12.3px;color:#ef7d79;font-weight:400;font-family:'Liberation Sans';font-style:normal;transform:scaleX(1.1447);transform-origin:0 0;"><span style="font-size:15.6px">V</span>a<span style="display:inline-block;transform:scaleY(1.2);transform-origin:50% 85%">ll</span>e <span style="font-size:15.6px">H</span>ermoso</div>
<div class="t" style="left:527.80px;top:139.16px;font-size:5.6px;color:#7fb897;font-weight:700;font-family:'Liberation Sans';font-style:normal;transform:scaleX(0.9322);transform-origin:0 0;">GAD PARROQUIAL</div>
<div class="t" style="left:219.90px;top:185.33px;font-size:8.0px;color:#141414;font-weight:700;font-family:'Liberation Sans';font-style:normal;transform:scaleX(0.9897);transform-origin:0 0;-webkit-text-stroke:0.2px #141414;">Oficio N° 123 GADPRVH-O-WMC-05-2022.</div>
<div class="t" style="left:237.20px;top:195.53px;font-size:8.0px;color:#2e2e2e;font-weight:400;font-family:'Liberation Sans';font-style:normal;transform:scaleX(1.0385);transform-origin:0 0;">Valle Hermoso, 19 de mayo del 2022.</div>
<div class="t" style="left:80.00px;top:215.33px;font-size:8.0px;color:#2e2e2e;font-weight:400;font-family:'Liberation Sans';font-style:normal;transform:scaleX(1.0069);transform-origin:0 0;">Ing. Wilson Erazo Argoti.</div>
<div class="t" style="left:80.00px;top:225.23px;font-size:8.0px;color:#141414;font-weight:700;font-family:'Liberation Sans';font-style:normal;transform:scaleX(0.9196);transform-origin:0 0;-webkit-text-stroke:0.2px #141414;">ALCALDE DEL CANTÓN SANTO DOMINGO.</div>
<div class="t" style="left:80.00px;top:235.23px;font-size:8.0px;color:#2e2e2e;font-weight:400;font-family:'Liberation Sans';font-style:normal;transform:scaleX(1.0073);transform-origin:0 0;">Presente.</div>
<div class="t" style="left:80.00px;top:260.53px;font-size:8.0px;color:#2e2e2e;font-weight:400;font-family:'Liberation Sans';font-style:normal;transform:scaleX(1.0295);transform-origin:0 0;">De nuestras consideraciones:</div>
<div class="t j" style="left:80.00px;top:277.03px;width:279.25px;font-size:8.0px;color:#2e2e2e;font-weight:400;font-family:'Liberation Sans';transform:scaleX(1.0600);transform-origin:0 0;">En nombre de quienes conformamos el Gobierno Autónomo Descentralizado</div>
<div class="t j" style="left:80.00px;top:287.00px;width:279.25px;font-size:8.0px;color:#2e2e2e;font-weight:400;font-family:'Liberation Sans';transform:scaleX(1.0600);transform-origin:0 0;">Parroquial Rural Valle Hermoso, reciba un cordial y respetuoso saludo,</div>
<div class="t" style="left:80.00px;top:296.97px;font-size:8.0px;color:#2e2e2e;font-weight:400;font-family:'Liberation Sans';font-style:normal;transform:scaleX(1.0334);transform-origin:0 0;">deseándole los mayores de los éxitos en sus funciones diarias encomendadas.</div>
<div class="t j" style="left:80.00px;top:312.43px;width:279.25px;font-size:8.0px;color:#2e2e2e;font-weight:400;font-family:'Liberation Sans';transform:scaleX(1.0600);transform-origin:0 0;">En alcance al oficio adjunto Oficio N° 088 GADPRVH-O-WMC-03-2022 en</div>
<div class="t j" style="left:80.00px;top:322.40px;width:279.25px;font-size:8.0px;color:#2e2e2e;font-weight:400;font-family:'Liberation Sans';transform:scaleX(1.0600);transform-origin:0 0;">cumplimiento al Art. 64 literal f) del COOTAD, vigilar la ejecución de obras y la</div>
<div class="t j" style="left:80.00px;top:332.37px;width:282.97px;font-size:8.0px;color:#2e2e2e;font-weight:400;font-family:'Liberation Sans';transform:scaleX(1.0460);transform-origin:0 0;">calidad de los servicios públicos y propiciar la organización de la ciudadanía en</div>
<div class="t j" style="left:80.00px;top:342.34px;width:285.65px;font-size:8.0px;color:#2e2e2e;font-weight:400;font-family:'Liberation Sans';transform:scaleX(1.0362);transform-origin:0 0;">la parroquia, nos permitimos informar a usted que hasta la presente fecha no se</div>
<div class="t j" style="left:80.00px;top:352.31px;width:279.25px;font-size:8.0px;color:#2e2e2e;font-weight:400;font-family:'Liberation Sans';transform:scaleX(1.0600);transform-origin:0 0;">nos ha contestado de manera formal y no se ha solucionado el problema que</div>
<div class="t j" style="left:80.00px;top:362.28px;width:279.25px;font-size:8.0px;color:#2e2e2e;font-weight:400;font-family:'Liberation Sans';transform:scaleX(1.0600);transform-origin:0 0;">existe en la cubierta construida en el Recinto Cristóbal Colón de manera anti</div>
<div class="t j" style="left:80.00px;top:372.25px;width:279.25px;font-size:8.0px;color:#2e2e2e;font-weight:400;font-family:'Liberation Sans';transform:scaleX(1.0600);transform-origin:0 0;">técnica ya que el volado del lado izquierdo está incompleto más corto del lado</div>
<div class="t" style="left:80.00px;top:382.22px;font-size:8.0px;color:#2e2e2e;font-weight:400;font-family:'Liberation Sans';font-style:normal;transform:scaleX(1.0822);transform-origin:0 0;">derecho.</div>
<div class="t j" style="left:80.00px;top:398.43px;width:279.25px;font-size:8.0px;color:#2e2e2e;font-weight:400;font-family:'Liberation Sans';transform:scaleX(1.0600);transform-origin:0 0;">Al respecto, hemos mantenido varias conversaciones con el señor Director de</div>
<div class="t j" style="left:80.00px;top:408.40px;width:279.25px;font-size:8.0px;color:#2e2e2e;font-weight:400;font-family:'Liberation Sans';transform:scaleX(1.0600);transform-origin:0 0;">Fiscalización Ing. Alejandro Perdomo Velásquez y con el Ing. Emilio Carreño</div>
<div class="t j" style="left:80.00px;top:418.37px;width:279.25px;font-size:8.0px;color:#2e2e2e;font-weight:400;font-family:'Liberation Sans';transform:scaleX(1.0600);transform-origin:0 0;">Fiscalizador de Obra, quien manifestó lo siguiente;  que se ha construido más</div>
<div class="t j" style="left:80.00px;top:428.34px;width:279.25px;font-size:8.0px;color:#2e2e2e;font-weight:400;font-family:'Liberation Sans';transform:scaleX(1.0600);transform-origin:0 0;">corto he incompleto el volado del costado izquierdo de la cubierta porque</div>
<div class="t j" style="left:80.00px;top:438.31px;width:279.25px;font-size:8.0px;color:#2e2e2e;font-weight:400;font-family:'Liberation Sans';transform:scaleX(1.0600);transform-origin:0 0;">supuestamente al otro lado de la pared existente, hay un predio particular o</div>
<div class="t j" style="left:80.00px;top:448.28px;width:279.25px;font-size:8.0px;color:#2e2e2e;font-weight:400;font-family:'Liberation Sans';transform:scaleX(1.0600);transform-origin:0 0;">privado para la construcción y que la mencionada obra, se ha diseñado de</div>
<div class="t j" style="left:501.00px;top:200.33px;width:292.37px;font-size:8.0px;color:#2e2e2e;font-weight:400;font-family:'Liberation Sans';transform:scaleX(1.0124);transform-origin:0 0;">Por lo antes expuesto y con estos antecedentes, solicitamos a usted una vez más</div>
<div class="t j" style="left:501.00px;top:210.30px;width:279.25px;font-size:8.0px;color:#2e2e2e;font-weight:400;font-family:'Liberation Sans';transform:scaleX(1.0600);transform-origin:0 0;">disponga a quien corresponda, se solucione el problema, antes de que se</div>
<div class="t" style="left:501.00px;top:220.27px;font-size:8.0px;color:#2e2e2e;font-weight:400;font-family:'Liberation Sans';font-style:normal;transform:scaleX(1.0645);transform-origin:0 0;">proceda a realizar la inauguración de la obra.</div>
<div class="t j" style="left:501.00px;top:235.63px;width:279.25px;font-size:8.0px;color:#2e2e2e;font-weight:400;font-family:'Liberation Sans';transform:scaleX(1.0600);transform-origin:0 0;">Caso contrario, como representantes legales de la Parroquia nos vemos</div>
<div class="t j" style="left:501.00px;top:245.60px;width:279.25px;font-size:8.0px;color:#2e2e2e;font-weight:400;font-family:'Liberation Sans';transform:scaleX(1.0600);transform-origin:0 0;">obligados a presentar estas observaciones a los organismos de control</div>
<div class="t" style="left:501.00px;top:255.57px;font-size:8.0px;color:#2e2e2e;font-weight:400;font-family:'Liberation Sans';font-style:normal;transform:scaleX(1.0805);transform-origin:0 0;">competentes.</div>
<div class="t j" style="left:501.00px;top:272.03px;width:279.25px;font-size:8.0px;color:#2e2e2e;font-weight:400;font-family:'Liberation Sans';transform:scaleX(1.0600);transform-origin:0 0;">Por lo antes expuesto, a la espera de que nuestro requerimiento sea atendido</div>
<div class="t j" style="left:501.00px;top:282.00px;width:279.25px;font-size:8.0px;color:#2e2e2e;font-weight:400;font-family:'Liberation Sans';transform:scaleX(1.0600);transform-origin:0 0;">por la seguridad y bienestar de la comunidad anticipamos nuestros sinceros</div>
<div class="t" style="left:501.00px;top:291.97px;font-size:8.0px;color:#2e2e2e;font-weight:400;font-family:'Liberation Sans';font-style:normal;transform:scaleX(1.0916);transform-origin:0 0;">agradecimientos.</div>
<div class="t" style="left:501.00px;top:323.73px;font-size:8.0px;color:#2e2e2e;font-weight:400;font-family:'Liberation Sans';font-style:normal;transform:scaleX(1.1031);transform-origin:0 0;">Atentamente,</div>
<div class="t" style="left:501.00px;top:354.63px;font-size:8.0px;color:#141414;font-weight:700;font-family:'Liberation Sans';font-style:normal;transform:scaleX(0.9834);transform-origin:0 0;-webkit-text-stroke:0.2px #141414;">Oficio N° 124 GADPRVH-O-WMC-05-2022.</div>
<div class="t" style="left:501.00px;top:364.43px;font-size:8.0px;color:#2e2e2e;font-weight:400;font-family:'Liberation Sans';font-style:normal;transform:scaleX(1.0355);transform-origin:0 0;">Valle Hermoso, 19 de mayo del 2022.</div>
<div class="t" style="left:501.00px;top:394.83px;font-size:8.0px;color:#2e2e2e;font-weight:400;font-family:'Liberation Sans';font-style:normal;transform:scaleX(1.0081);transform-origin:0 0;">Ing. Wilson Erazo Argoti.</div>
<div class="t" style="left:501.00px;top:404.93px;font-size:8.0px;color:#141414;font-weight:700;font-family:'Liberation Sans';font-style:normal;transform:scaleX(0.9244);transform-origin:0 0;-webkit-text-stroke:0.2px #141414;">ALCALDE DEL CANTÓN SANTO DOMINGO.</div>
<div class="t" style="left:501.00px;top:415.53px;font-size:8.0px;color:#2e2e2e;font-weight:400;font-family:'Liberation Sans';font-style:normal;transform:scaleX(1.0073);transform-origin:0 0;">Presente.</div>
<div class="t" style="left:501.00px;top:446.53px;font-size:8.0px;color:#2e2e2e;font-weight:400;font-family:'Liberation Sans';font-style:normal;transform:scaleX(1.0390);transform-origin:0 0;">De nuestras consideraciones:</div>
<div class="t" style="left:672.40px;top:423.87px;font-size:11.5px;color:#c6c6c6;font-weight:400;font-family:'Liberation Sans';font-style:normal;transform:scaleX(1.1106);transform-origin:0 0;">Activar Windows</div>
<div class="t" style="left:672.40px;top:439.92px;font-size:8.6px;color:#c6c6c6;font-weight:400;font-family:'Liberation Sans';font-style:normal;transform:scaleX(1.1150);transform-origin:0 0;">Ve a Configuración para activar Windows.</div>
</body></html>
